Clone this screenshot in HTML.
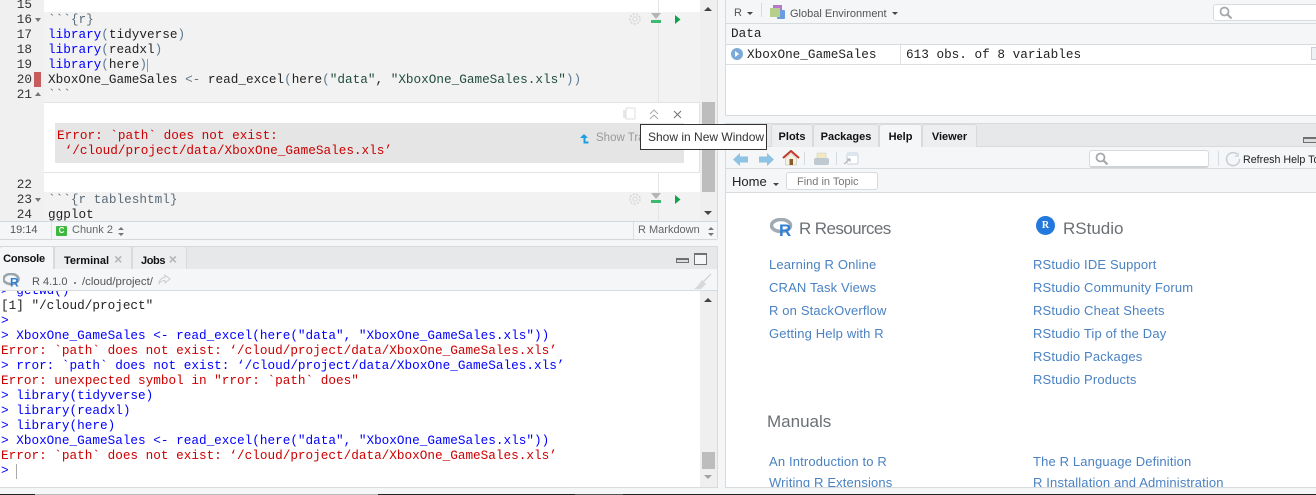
<!DOCTYPE html>
<html><head><meta charset="utf-8">
<style>
html,body{margin:0;padding:0}
body{width:1316px;height:495px;overflow:hidden;background:#f4f6f7;position:relative;font-family:"Liberation Sans",sans-serif}
div,span.a,svg.a{position:absolute}
.m{font-family:"Liberation Mono",monospace;font-size:12.7px;line-height:15px;white-space:pre;height:15px}
.n{left:0;width:32px;text-align:right;color:#333;font-family:"Liberation Mono",monospace;font-size:12.7px;line-height:15px}
.b{color:#00f}.g{color:#5c6b78}.k{color:#222}.br{color:#5c7a90}.gr{color:#1f4d3a}
.c{color:#00f;left:1px}
.e{color:#c00;left:1px}
.s{font-size:12px;white-space:pre}
.t{font-size:11px;font-weight:bold;color:#111;text-align:center;line-height:24px;box-sizing:border-box;background:#eceeef;border:1px solid #d8dbdd;border-bottom:none;border-radius:3px 3px 0 0}
.l{color:#4a82c3;font-size:13px;letter-spacing:.15px;white-space:pre;line-height:16px}
.h{color:#6b7075;font-size:17px;white-space:pre;line-height:20px}
</style></head><body>

<!-- Source pane -->
<div style="left:0;top:0;width:717px;height:238px;background:#fff;overflow:hidden">
  <div style="left:0;top:0;width:44px;height:222px;background:#f0f0f0"></div>
  <div style="left:44px;top:12px;width:656px;height:90px;background:#f2f2f2"></div>
  <div style="left:44px;top:192px;width:656px;height:30px;background:#f2f2f2"></div>
  <div style="left:658px;top:0;width:1px;height:222px;background:#e4e4e4"></div>

  <div class="n" style="top:-3px">15</div>
  <div class="n" style="top:12px">16</div>
  <div class="n" style="top:27px">17</div>
  <div class="n" style="top:42px">18</div>
  <div class="n" style="top:57px">19</div>
  <div class="n" style="top:72px">20</div>
  <div class="n" style="top:87px">21</div>
  <div class="n" style="top:177px">22</div>
  <div class="n" style="top:192px">23</div>
  <div class="n" style="top:207px">24</div>
  <div style="left:35px;top:18px;width:0;height:0;border:3px solid transparent;border-top:4px solid #777;border-bottom:0"></div>
  <div style="left:35px;top:92px;width:0;height:0;border:3px solid transparent;border-bottom:4px solid #777;border-top:0"></div>
  <div style="left:35px;top:198px;width:0;height:0;border:3px solid transparent;border-top:4px solid #777;border-bottom:0"></div>
  <div style="left:34px;top:72px;width:7px;height:15px;background:#c75c5c"></div>

  <div class="m g" style="left:48px;top:12px">&#96;&#96;&#96;{r}</div>
  <div class="m" style="left:48px;top:27px"><span class="b">library</span><span class="br">(</span><span class="k">tidyverse</span><span class="br">)</span></div>
  <div class="m" style="left:48px;top:42px"><span class="b">library</span><span class="br">(</span><span class="k">readxl</span><span class="br">)</span></div>
  <div class="m" style="left:48px;top:57px"><span class="b">library</span><span class="br">(</span><span class="k">here</span><span class="br">)</span></div>
  <div style="left:147px;top:59px;width:1px;height:13px;background:#999"></div>
  <div class="m" style="left:48px;top:72px"><span class="k">XboxOne_GameSales </span><span style="color:#687687">&lt;-</span><span class="k"> read_excel</span><span class="br">(</span><span class="k">here</span><span class="br">(</span><span class="gr">"data"</span><span class="k">, </span><span class="gr">"XboxOne_GameSales.xls"</span><span class="br">))</span></div>
  <div class="m g" style="left:48px;top:87px">&#96;&#96;&#96;</div>
  <div class="m g" style="left:48px;top:192px">&#96;&#96;&#96;{r tableshtml}</div>
  <div class="m k" style="left:48px;top:207px">ggplot</div>

  <!-- chunk output -->
  <div style="left:44px;top:102px;width:656px;height:71px;box-sizing:border-box;border:1px solid #e3e3e3;border-left:none;background:#fff"></div>
  <div style="left:55px;top:123px;width:629px;height:40px;background:#e5e5e5"></div>
  <div class="m" style="left:57px;top:128px;color:#c00">Error: &#96;path&#96; does not exist:
 ‘/cloud/project/data/XboxOne_GameSales.xls’</div>
  <svg class="a" style="left:622px;top:107px" width="14" height="14" viewBox="0 0 14 14"><rect x="1" y="3" width="8" height="8" fill="#e8e8e8"/><rect x="4" y="1" width="9" height="11" rx="1" fill="#fff" stroke="#ddd"/></svg>
  <svg class="a" style="left:648px;top:109px" width="12" height="11" viewBox="0 0 12 11"><path d="M2 5L6 1L10 5M2 10L6 6L10 10" fill="none" stroke="#aaa" stroke-width="1"/></svg>
  <svg class="a" style="left:673px;top:110px" width="9" height="9" viewBox="0 0 9 9"><path d="M1 1L8 8M8 1L1 8" stroke="#777" stroke-width="1.1"/></svg>
  <svg class="a" style="left:579px;top:134px" width="10" height="10" viewBox="0 0 10 10"><path d="M5 0L9 4H6.5V7.5H9.5V9.5H4.5V4H1Z" fill="#1a9fe0"/></svg>
  <div class="s" style="left:596px;top:132px;color:#999;font-size:11.5px">Show Tra</div>

  <!-- chunk icons line 16 -->
  <svg class="a" style="left:628px;top:12px" width="14" height="14" viewBox="0 0 14 14"><circle cx="7" cy="7" r="5" fill="none" stroke="#d8d8d8" stroke-width="1.6" stroke-dasharray="2.2 1.3"/><circle cx="7" cy="7" r="2.2" fill="none" stroke="#d8d8d8"/></svg>
  <svg class="a" style="left:651px;top:13px" width="11" height="12" viewBox="0 0 11 12"><path d="M0 0H10L5 6Z" fill="#b5b5b5"/><rect y="7" width="10" height="3" fill="#3fb871"/></svg>
  <svg class="a" style="left:675px;top:15px" width="6" height="9" viewBox="0 0 6 9"><path d="M0 0L5.500 4.500L0 9Z" fill="#11a14e"/></svg>

  <!-- chunk icons line 23 -->
  <svg class="a" style="left:628px;top:192px" width="14" height="14" viewBox="0 0 14 14"><circle cx="7" cy="7" r="5" fill="none" stroke="#d8d8d8" stroke-width="1.6" stroke-dasharray="2.2 1.3"/><circle cx="7" cy="7" r="2.2" fill="none" stroke="#d8d8d8"/></svg>
  <svg class="a" style="left:651px;top:193px" width="11" height="12" viewBox="0 0 11 12"><path d="M0 0H10L5 6Z" fill="#b5b5b5"/><rect y="7" width="10" height="3" fill="#3fb871"/></svg>
  <svg class="a" style="left:675px;top:195px" width="6" height="9" viewBox="0 0 6 9"><path d="M0 0L5.500 4.500L0 9Z" fill="#11a14e"/></svg>

  <!-- scrollbar -->
  <div style="left:700px;top:0;width:17px;height:222px;background:#efefef"></div>
  <div style="left:702px;top:102px;width:13px;height:90px;background:#bdbdbd"></div>
  <div style="left:704px;top:7px;width:0;height:0;border:4px solid transparent;border-bottom:4px solid #444;border-top:0"></div>
  <div style="left:704px;top:211px;width:0;height:0;border:4px solid transparent;border-top:4px solid #444;border-bottom:0"></div>
</div>

<!-- source status bar -->
<div style="left:0;top:221px;width:717px;height:17px;background:#f4f6f7;border-top:1px solid #d5d8da;border-bottom:1px solid #d5d8da;box-sizing:content-box">
  <div class="s" style="left:10px;top:1px;font-size:11px;color:#555;line-height:15px">19:14</div>
  <div style="left:51px;top:0;width:1px;height:17px;background:#dcdfe1"></div>
  <div style="left:56px;top:4px;width:11px;height:10px;background:#3fb83f;border-radius:1px;color:#fff;font-size:8px;font-weight:bold;text-align:center;line-height:10px">C</div>
  <div class="s" style="left:72px;top:1px;font-size:11px;color:#666;line-height:15px">Chunk 2</div>
  <svg class="a" style="left:117px;top:4px" width="8" height="11" viewBox="0 0 8 11"><path d="M1 4L4 1L7 4ZM1 7L4 10L7 7Z" fill="#777"/></svg>
  <div style="left:633px;top:0;width:1px;height:17px;background:#dcdfe1"></div>
  <div class="s" style="left:638px;top:1px;font-size:11px;color:#666;line-height:15px">R Markdown</div>
  <svg class="a" style="left:707px;top:4px" width="8" height="11" viewBox="0 0 8 11"><path d="M1 4L4 1L7 4ZM1 7L4 10L7 7Z" fill="#777"/></svg>
</div>
<div style="left:717px;top:0;width:1px;height:239px;background:#d8dbdd"></div>

<!-- console pane -->
<div style="left:0;top:246px;width:717px;height:241px;border-right:1px solid #d8dbdd;overflow:hidden;background:#fff">
  <div style="left:0;top:0;width:717px;height:23px;background:#e6e8ea;border-top:1px solid #d8dbdd;box-sizing:border-box"></div>
  <div class="t" style="left:0;top:0;width:54px;height:24px;background:#f4f6f7;border-left:none;letter-spacing:-.25px;padding-right:5px">Console</div>
  <div class="t" style="left:54px;top:0;width:78px;height:23px;text-align:left;padding-left:9px">Terminal <span style="color:#b5b5b5;font-size:14px;margin-left:2px">×</span></div>
  <div class="t" style="left:132px;top:0;width:55px;height:23px;text-align:left;padding-left:8px;letter-spacing:-.4px">Jobs <span style="color:#b5b5b5;font-size:14px;margin-left:1px">×</span></div>
  <div style="left:676px;top:12px;width:13px;height:5px;box-sizing:border-box;border:1px solid #707070;border-top:2px solid #707070;background:#ddd"></div>
  <div style="left:694px;top:7px;width:13px;height:12px;box-sizing:border-box;border:1px solid #707070;border-top:2px solid #707070;background:#f4f6f7"></div>

  <div style="left:0;top:23px;width:717px;height:21px;background:#f4f6f7;border-bottom:1px solid #d8dbdd;box-sizing:content-box"></div>
  <svg class="a" style="left:3px;top:27px" width="18" height="14" viewBox="0 0 18 14"><ellipse cx="8" cy="6" rx="7.500" ry="5" fill="none" stroke="#9aa5ad" stroke-width="2.600"/><text x="7" y="13.500" font-family="Liberation Sans" font-weight="bold" font-size="12" fill="#2f7fd6">R</text></svg>
  <div class="s" style="left:32px;top:29px;font-size:11px;color:#555;line-height:14px">R 4.1.0</div>
  <div style="left:74px;top:36px;width:2px;height:2px;background:#888"></div>
  <div class="s" style="left:82px;top:29px;font-size:11.400px;color:#555;line-height:14px">/cloud/project/</div>
  <svg class="a" style="left:158px;top:28px" width="13" height="12" viewBox="0 0 13 12"><path d="M7 1L12 5L7 9V6.500C4 6.500 2 8 1 10C1 6 4 3.500 7 3.500Z" fill="#f4f6f7" stroke="#ccc"/></svg>
  <svg class="a" style="left:692px;top:27px" width="20" height="18" viewBox="0 0 20 18"><path d="M19 1L11 9" stroke="#ccc" stroke-width="1.200"/><path d="M10 7L14 11L9 16L2 16C5 14 7 11 10 7Z" fill="#d8d8d8"/></svg>

  <div style="left:0;top:45px;width:717px;height:196px;overflow:hidden;background:#fff">
    <div class="m c" style="top:-8px">&gt; getwd()</div>
    <div class="m" style="left:1px;top:7px;color:#222">[1] "/cloud/project"</div>
    <div class="m c" style="top:22px">&gt;</div>
    <div class="m c" style="top:37px">&gt; XboxOne_GameSales &lt;- read_excel(here("data", "XboxOne_GameSales.xls"))</div>
    <div class="m e" style="top:52px">Error: &#96;path&#96; does not exist: ‘/cloud/project/data/XboxOne_GameSales.xls’</div>
    <div class="m c" style="top:67px">&gt; rror: &#96;path&#96; does not exist: ‘/cloud/project/data/XboxOne_GameSales.xls’</div>
    <div class="m e" style="top:82px">Error: unexpected symbol in "rror: &#96;path&#96; does"</div>
    <div class="m c" style="top:97px">&gt; library(tidyverse)</div>
    <div class="m c" style="top:112px">&gt; library(readxl)</div>
    <div class="m c" style="top:127px">&gt; library(here)</div>
    <div class="m c" style="top:142px">&gt; XboxOne_GameSales &lt;- read_excel(here("data", "XboxOne_GameSales.xls"))</div>
    <div class="m e" style="top:157px">Error: &#96;path&#96; does not exist: ‘/cloud/project/data/XboxOne_GameSales.xls’</div>
    <div class="m c" style="top:172px">&gt;</div>
    <div style="left:16px;top:173px;width:1px;height:15px;background:#aaa"></div>
    <div style="left:700px;top:0;width:17px;height:196px;background:#efefef"></div>
    <div style="left:702px;top:161px;width:13px;height:17px;background:#bdbdbd"></div>
    <div style="left:704px;top:7px;width:0;height:0;border:4px solid transparent;border-bottom:4px solid #444;border-top:0"></div>
    <div style="left:704px;top:184px;width:0;height:0;border:4px solid transparent;border-top:4px solid #a3a3a3;border-bottom:0"></div>
  </div>
</div>
<div style="left:0;top:487px;width:718px;height:1px;background:#d8dbdd"></div>

<!-- Environment pane -->
<div style="left:725px;top:0;width:591px;height:115px;background:#fff;border-left:1px solid #d8dbdd;border-bottom:1px solid #d8dbdd;box-sizing:content-box;overflow:hidden">
  <div style="left:0;top:0;width:591px;height:23px;background:#f4f6f7;border-bottom:1px solid #d8dbdd"></div>
  <div class="s" style="left:8px;top:6px;font-size:11px;color:#555;line-height:14px">R</div>
  <div style="left:21px;top:12px;width:0;height:0;border:3px solid transparent;border-top:3px solid #444;border-bottom:0"></div>
  <div style="left:35px;top:3px;width:1px;height:14px;background:#d8dbdd"></div>
  <div style="left:47px;top:5px;width:9px;height:10px;background:#b678c8"></div>
  <div style="left:51px;top:10px;width:8px;height:9px;background:#6c9ce0;border-radius:1px"></div>
  <div style="left:44px;top:8px;width:10px;height:9px;background:#b6cf8c"></div>
  <div class="s" style="left:64px;top:7px;font-size:11px;color:#555;line-height:14px">Global Environment</div>
  <div style="left:166px;top:12px;width:0;height:0;border:3px solid transparent;border-top:3px solid #444;border-bottom:0"></div>
  <div style="left:487px;top:4px;width:110px;height:17px;background:#fff;border:1px solid #d8dbdd;border-radius:3px;box-sizing:border-box"></div>
  <svg class="a" style="left:493px;top:6px" width="14" height="14" viewBox="0 0 14 14"><circle cx="5.500" cy="5.500" r="4" fill="none" stroke="#a5a9ac" stroke-width="1.800"/><path d="M8.500 8.500L12.500 12.500" stroke="#a5a9ac" stroke-width="2.200"/></svg>

  <div style="left:0;top:24px;width:591px;height:20px;background:#f4f6f7;border-bottom:1px solid #d8dbdd"></div>
  <div class="m" style="left:5px;top:26px;color:#222">Data</div>
  <div style="left:0;top:45px;width:591px;height:19px;background:#fff;border-bottom:1px solid #dde0e2"></div>
  <div style="left:5px;top:48px;width:12px;height:12px;border-radius:50%;background:#7ba9d8"></div>
  <div style="left:9px;top:51px;width:0;height:0;border:3px solid transparent;border-left:4px solid #fff;border-right:0"></div>
  <div class="m" style="left:21px;top:47px;color:#222">XboxOne_GameSales</div>
  <div style="left:174px;top:45px;width:1px;height:19px;background:#dde0e2"></div>
  <div class="m" style="left:180px;top:47px;color:#222">613 obs. of 8 variables</div>
  <div style="left:585px;top:47px;width:8px;height:13px;background:#eef2f5;border:1px solid #ccd;box-sizing:border-box"></div>
</div>

<!-- Help pane -->
<div style="left:725px;top:123px;width:591px;height:364px;background:#fff;border-left:1px solid #d8dbdd;border-bottom:1px solid #d8dbdd;box-sizing:content-box;overflow:hidden">
  <div style="left:0;top:0;width:591px;height:24px;background:#e6e8ea;border-top:1px solid #d8dbdd;border-bottom:1px solid #d8dbdd;box-sizing:border-box"></div>
  <div class="t" style="left:45px;top:1px;width:42px;height:23px">Plots</div>
  <div class="t" style="left:87px;top:1px;width:66px;height:23px">Packages</div>
  <div class="t" style="left:153px;top:1px;width:43px;height:24px;background:#f4f6f7">Help</div>
  <div class="t" style="left:196px;top:1px;width:55px;height:23px">Viewer</div>
  <div style="left:577px;top:14px;width:16px;height:6px;box-sizing:border-box;border:1px solid #707070;border-top:2px solid #707070;background:#ddd"></div>

  <div style="left:0;top:24px;width:591px;height:21px;background:#f4f6f7;border-bottom:1px solid #d8dbdd"></div>
  <svg class="a" style="left:7px;top:30px" width="15" height="13" viewBox="0 0 15 13"><path d="M0 6.500L7 0V3.500H15V9.500H7V13Z" fill="#8fc3e4"/></svg>
  <svg class="a" style="left:33px;top:30px" width="15" height="13" viewBox="0 0 15 13"><path d="M15 6.500L8 0V3.500H0V9.500H8V13Z" fill="#8fc3e4"/></svg>
  <svg class="a" style="left:56px;top:27px" width="18" height="16" viewBox="0 0 18 16"><path d="M1 8L9 1L17 8" fill="none" stroke="#c0392b" stroke-width="2"/><path d="M3.500 8L9 3.500L14.500 8V15H3.500Z" fill="#f5f1e3" stroke="#b8b3a0" stroke-width=".5"/><rect x="7.500" y="9" width="3.500" height="6" fill="#8a5a2b"/></svg>
  <div style="left:78px;top:29px;width:1px;height:13px;background:#d8dbdd"></div>
  <svg class="a" style="left:87px;top:29px" width="17" height="15" viewBox="0 0 17 15"><rect x="4" y="1" width="9" height="6" fill="#f3e9c0" stroke="#ccc" stroke-width=".5"/><rect x="1" y="6" width="15" height="7" rx="2" fill="#bfc9d1"/></svg>
  <div style="left:110px;top:29px;width:1px;height:13px;background:#d8dbdd"></div>
  <svg class="a" style="left:117px;top:29px" width="16" height="13" viewBox="0 0 16 13"><rect x="4" y="1" width="11" height="11" rx="1.500" fill="#fff" stroke="#c8d2da"/><rect x="4" y="1" width="11" height="3" fill="#dbe6ee"/><path d="M1 12L7 7M4 7H7V10" fill="none" stroke="#aab" stroke-width="1"/></svg>

  <div style="left:363px;top:27px;width:120px;height:18px;background:#fff;border:1px solid #d8dbdd;border-bottom:2px solid #d0d3d5;border-radius:3px;box-sizing:border-box"></div>
  <svg class="a" style="left:369px;top:29px" width="14" height="14" viewBox="0 0 14 14"><circle cx="5.500" cy="5.500" r="4" fill="none" stroke="#a5a9ac" stroke-width="1.800"/><path d="M8.500 8.500L12.500 12.500" stroke="#a5a9ac" stroke-width="2.200"/></svg>
  <div style="left:492px;top:28px;width:1px;height:15px;background:#d8dbdd"></div>
  <svg class="a" style="left:499px;top:28px" width="16" height="16" viewBox="0 0 16 16"><path d="M13 4A6.500 6.500 0 1 0 14.500 8" fill="none" stroke="#c8ced3" stroke-width="1.500"/><path d="M9 6H14V1Z" fill="#d8dde1"/></svg>
  <div class="s" style="left:517px;top:30px;font-size:10.700px;color:#222;line-height:14px">Refresh Help Topic</div>

  <div style="left:0;top:46px;width:591px;height:23px;background:#f4f6f7;border-bottom:1px solid #d8dbdd"></div>
  <div class="s" style="left:6px;top:51px;font-size:13px;color:#222;line-height:16px">Home</div>
  <div style="left:47px;top:60px;width:0;height:0;border:3px solid transparent;border-top:3px solid #444;border-bottom:0"></div>
  <div style="left:60px;top:49px;width:92px;height:18px;background:#fff;border:1px solid #d8dbdd;border-radius:3px;box-sizing:border-box;font-size:11px;color:#777;line-height:19px;padding-left:10px">Find in Topic</div>

  <svg class="a" style="left:44px;top:95px" width="24" height="19" viewBox="0 0 24 19"><ellipse cx="11" cy="7.500" rx="9.500" ry="6" fill="none" stroke="#a0aab2" stroke-width="3.500"/><text x="9" y="18" font-family="Liberation Sans" font-weight="bold" font-size="17" fill="#2f7fd6">R</text></svg>
  <div class="h" style="left:73px;top:96px;letter-spacing:-.6px">R Resources</div>
  <div style="left:310px;top:93px;width:19px;height:19px;border-radius:50%;background:#2278dc;color:#fff;font:bold 10px 'Liberation Serif',serif;text-align:center;line-height:19px">R</div>
  <div class="h" style="left:337px;top:96px">RStudio</div>

  <div class="l" style="left:43px;top:134px">Learning R Online</div>
  <div class="l" style="left:43px;top:157px">CRAN Task Views</div>
  <div class="l" style="left:43px;top:180px">R on StackOverflow</div>
  <div class="l" style="left:43px;top:203px">Getting Help with R</div>
  <div class="l" style="left:307px;top:134px">RStudio IDE Support</div>
  <div class="l" style="left:307px;top:157px">RStudio Community Forum</div>
  <div class="l" style="left:307px;top:180px">RStudio Cheat Sheets</div>
  <div class="l" style="left:307px;top:203px">RStudio Tip of the Day</div>
  <div class="l" style="left:307px;top:226px">RStudio Packages</div>
  <div class="l" style="left:307px;top:249px">RStudio Products</div>

  <div class="h" style="left:41px;top:289px">Manuals</div>
  <div class="l" style="left:43px;top:331px">An Introduction to R</div>
  <div class="l" style="left:43px;top:352px">Writing R Extensions</div>
  <div class="l" style="left:307px;top:331px">The R Language Definition</div>
  <div class="l" style="left:307px;top:352px">R Installation and Administration</div>
</div>

<!-- tooltip -->
<div style="left:640px;top:124px;width:127px;height:26px;background:#fff;border:1px solid #333;box-sizing:border-box;font-size:12px;color:#333;line-height:24px;padding-left:7px;white-space:pre;z-index:5">Show in New Window</div>

<!-- taskbar strip -->
<div style="left:0;top:494px;width:1316px;height:1px;background:#222"></div>
<div style="left:35px;top:494px;width:343px;height:1px;background:#bbb"></div>
<div style="left:575px;top:494px;width:48px;height:1px;background:#555"></div>
</body></html>
